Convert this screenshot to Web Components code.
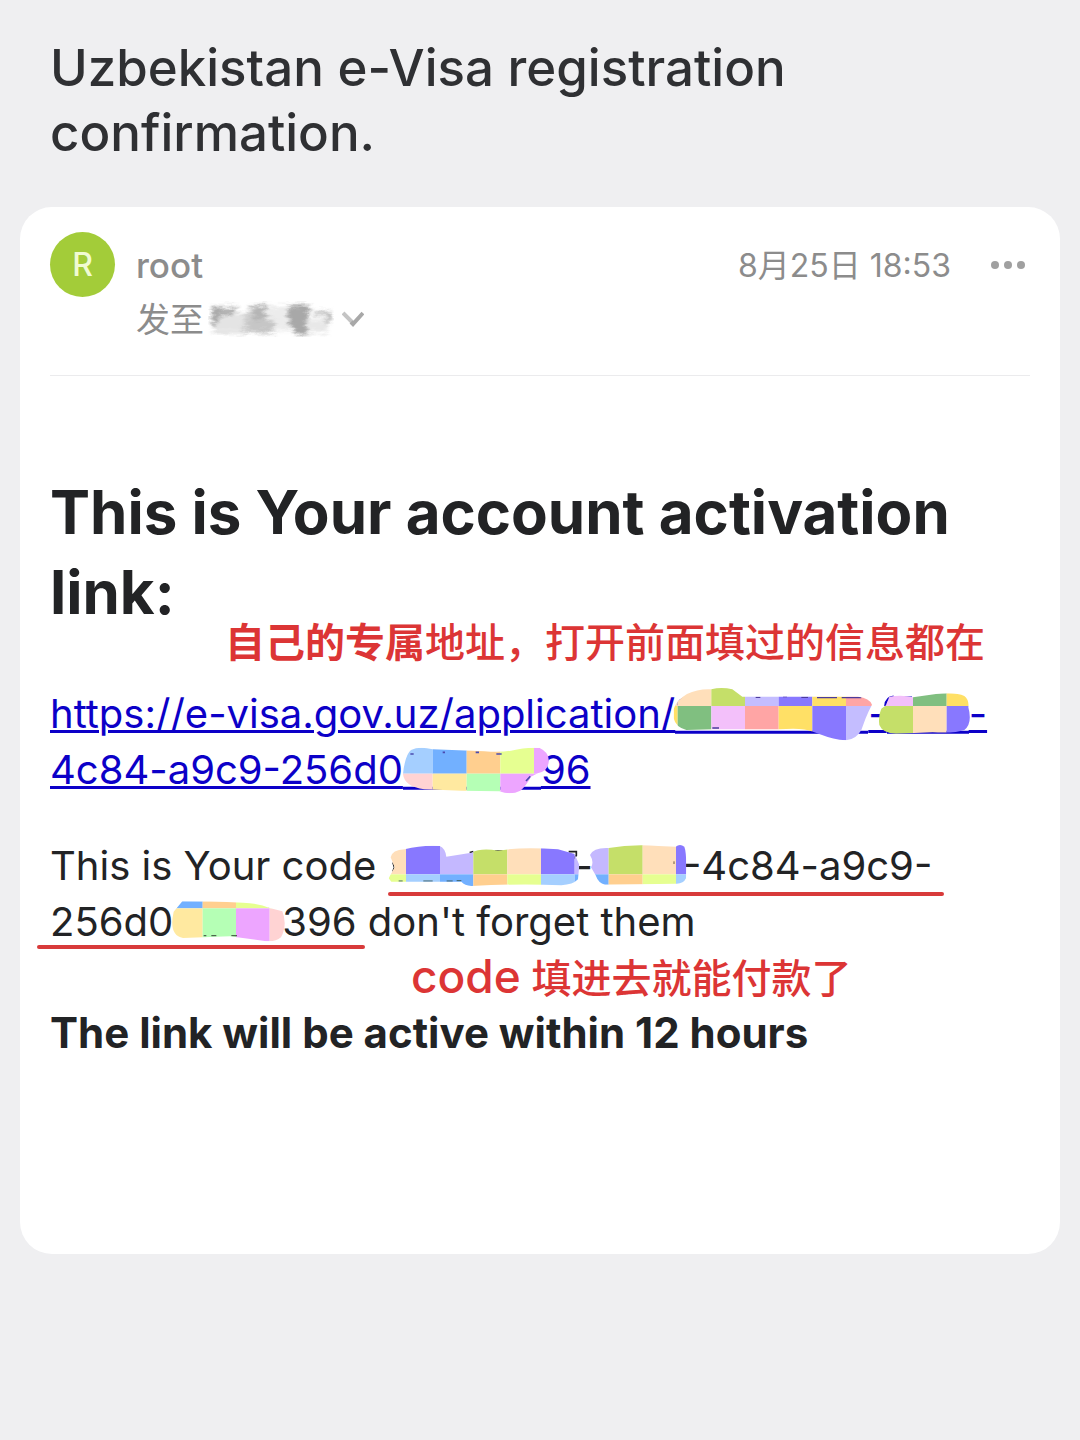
<!DOCTYPE html>
<html lang="zh-CN">
<head>
<meta charset="utf-8">
<meta name="viewport" content="width=device-width, initial-scale=1">
<title>Uzbekistan e-Visa registration confirmation.</title>
<style>
  body {
    margin: 0;
    background: #efeff1;
    color: #222325;
    font-family: Inter, "Noto Sans CJK SC", sans-serif;
  }
</style>
</head>
<body>
<mail-page>
  <span slot="subject">Uzbekistan e-Visa registration confirmation.</span>
  <mail-header name="root" initial="R" date="8月25日 18:53"></mail-header>
  <mail-body></mail-body>
</mail-page>

<script>
class MailPage extends HTMLElement {
  constructor() {
    super();
    this.attachShadow({ mode: 'open' });
    this.shadowRoot.innerHTML = `
      <style>
        :host { display: block; padding: 35px 20px; }
        h1 {
          margin: 0 30px 42px;
          max-width: 800px;
          font-size: 51px;
          line-height: 65px;
          font-weight: 500;
          color: #2f3033;
        }
        main {
          padding: 25px 30px 193px;
          background: #fff;
          border-radius: 32px;
        }
      </style>
      <h1><slot name="subject"></slot></h1>
      <main><slot></slot></main>
    `;
  }
}

class MailHeader extends HTMLElement {
  constructor() {
    super();
    this.attachShadow({ mode: 'open' });
  }

  connectedCallback() {
    this.shadowRoot.innerHTML = `
      <style>
        :host {
          display: flex;
          gap: 21px;
          padding-bottom: 34px;
          border-bottom: 1px solid #ebebed;
          color: #8c8c8c;
        }
        .avatar {
          width: 65px;
          height: 65px;
          border-radius: 50%;
          background: #a3cc39;
          color: #f0fbd2;
          font-size: 32px;
          line-height: 65px;
          font-weight: 500;
          text-align: center;
        }
        .info { flex: 1; }
        .row { display: flex; align-items: center; justify-content: space-between; height: 65px; }
        .name { font-size: 35px; font-weight: 500; }
        .right { display: flex; align-items: center; gap: 40px; padding-right: 5px; }
        time, .label { padding-bottom: 4px; }
        time { font-size: 32px; }
        button {
          display: flex;
          align-items: center;
          padding: 0;
          border: 0;
          background: none;
          color: inherit;
          font: inherit;
          cursor: pointer;
        }
        .to { height: 44px; font-size: 34px; }
        svg { display: block; }
        .arrow { margin-left: 8px; }
      </style>
      <div class="avatar">${this.getAttribute('initial')}</div>
      <div class="info">
        <div class="row">
          <span class="name">${this.getAttribute('name')}</span>
          <div class="right">
            <time>${this.getAttribute('date')}</time>
            <button aria-label="更多">
              <svg width="34" height="8" viewBox="0 0 34 8" fill="#a0a0a0">
                <circle cx="4" cy="4" r="4"/><circle cx="17" cy="4" r="4"/><circle cx="30" cy="4" r="4"/>
              </svg>
            </button>
          </div>
        </div>
        <button class="to"><span class="label">发至</span><hidden-name></hidden-name>
          <svg class="arrow" width="22" height="16" viewBox="0 0 22 16" fill="none" stroke="#a8a8a8" stroke-width="4">
            <path d="M1 2L11 12" stroke="#c4c4c4"/><path d="M9 11L11 13L21 2"/>
          </svg>
        </button>
      </div>
    `;
  }
}

// Smudged recipient name
class HiddenName extends HTMLElement {
  constructor() {
    super();
    this.attachShadow({ mode: 'open' });
    this.shadowRoot.innerHTML = `
      <style>
        :host { display: block; margin-left: 4px; }
        svg { display: block; }
      </style>
      <svg width="126" height="36" viewBox="0 0 126 36" aria-hidden="true">
        <defs>
          <filter id="smudge" x="0" y="0" width="1" height="1">
            <feGaussianBlur stdDeviation="2" result="soft"/>
            <feTurbulence type="fractalNoise" baseFrequency="0.08 0.3" numOctaves="3" seed="4"/>
            <feDisplacementMap in="soft" scale="9" xChannelSelector="R" yChannelSelector="G"/>
          </filter>
        </defs>
        <g filter="url(#smudge)">
          <rect width="126" height="36" fill="none"/>
          <path d="M4 6H28V15H15V29H7L2 17Z" fill="#aaa"/>
          <path d="M14 13H40V33H5V28Z" fill="#e4e4e4"/>
          <path d="M36 15L44 4H59V31H36Z" fill="#d2d2d2"/>
          <path d="M45 5H58V18H44Z" fill="#b5b5b5"/>
          <path d="M39 18H67V32H37Z" fill="#c6c6c6"/>
          <path d="M60 5H82V30H66V17H60Z" fill="#ececec"/>
          <path d="M81 4H101V33H87L80 20Z" fill="#a8a8a8"/>
          <path d="M98 18H120V32H99Z" fill="#e8e8e8"/>
          <path d="M106 10H123V21H117V14H106Z" fill="#bbb"/>
        </g>
      </svg>
    `;
  }
}

// Each mosaic: box = viewBox in thirds of a pixel, cols = column edges,
// split = y between the two rows, shape = painted outline, under = what shows around it
const MOSAICS = {
  linkA: {
    box: [96, 48, 579, 168],
    cols: [84, 104, 205, 306, 407, 508, 609, 700],
    split: 108,
    top: ['#ffdfba', '#ffdfba', '#c5df69', '#c4bdff', '#8878ff', '#ffe066', '#ffa5a5'],
    bottom: ['#ffe066', '#80bf80', '#f3c0fa', '#ffa5a5', '#ffe066', '#8878ff', '#c4bdff'],
    shape: 'M92 118Q98 92 132 72Q165 56 205 58Q235 50 268 58L298 80L645 80Q680 84 687 104Q678 120 668 145L655 180Q640 208 609 211Q570 208 535 194L506 184Q480 172 407 178L210 178L130 180Q98 172 92 145Z',
    under: '<path d="M96 186.500H675" stroke="#0c00c8" stroke-width="9"/><path d="M104 106Q108 86 130 84" stroke="#0c00c8" stroke-width="6" fill="none"/>',
    over: '<path d="M338 82H352M420 80H432M475 82H495M522 83H582M596 83H655M208 174H228" stroke="#4b3b9c" stroke-width="4"/>'
  },
  linkB: {
    box: [733, 48, 246, 168],
    cols: [706, 811, 912, 990],
    split: 108,
    top: ['#f3c0fa', '#80bf80', '#ffe066'],
    bottom: ['#c5df69', '#ffdfba', '#8878ff'],
    shape: 'M730 106L740 80Q780 74 811 82L880 72Q940 66 965 78Q980 90 977 112Q990 160 965 180Q940 190 870 187L760 191Q720 190 710 165Q706 138 716 116Z',
    under: '<path d="M733 186.500H979" stroke="#0c00c8" stroke-width="9"/><path d="M728 108Q730 82 753 80M785 83H808" stroke="#0c00c8" stroke-width="7" fill="none"/>',
    over: ''
  },
  linkC: {
    box: [56, 36, 414, 168],
    cols: [50, 145, 247, 348, 449, 500],
    split: 131,
    top: ['#a5cfff', '#72b0ff', '#ffcf8f', '#e6ff91', '#eda5ff'],
    bottom: ['#ffd3d3', '#ffe9a0', '#b5ffb5', '#eda5ff', '#eda5ff'],
    shape: 'M56 132Q62 75 80 60Q105 48 145 58L300 64Q350 68 380 62Q430 50 466 54Q500 70 492 102Q488 125 460 130L440 140Q425 168 408 182Q380 196 345 184Q230 184 120 178Q60 170 56 132Z',
    under: '<path d="M56 174.500H470" stroke="#0c00c8" stroke-width="9"/>',
    over: '<path d="M78 72H88M175 67H182M274 67H284M336 72H352M425 153L438 139" stroke="#4b4bb0" stroke-width="5"/>'
  },
  codeA: {
    box: [50, 24, 561, 168],
    cols: [45, 104, 206, 306, 408, 509, 610, 640],
    split: 133,
    top: ['#ffdfba', '#8878ff', '#c4b8ff', '#c5df69', '#ffdfba', '#8878ff', '#c4b8ff'],
    bottom: ['#e6ff91', '#a5cfff', '#72b0ff', '#ffcf8f', '#e6ff91', '#a5cfff', '#72b0ff'],
    shape: 'M52 145L70 112L58 82Q62 60 100 58Q150 45 205 48Q222 55 225 80L300 68Q330 52 380 62Q450 50 560 58L610 72L624 105L620 148Q605 164 570 166Q450 160 300 168Q280 166 270 155H60Z',
    under: '<path d="M64 98L68 112L64 124" stroke="#222325" stroke-width="3" fill="none"/><path d="M295 68L306 65M370 63H394M592 65H615V76L603 90" stroke="#222325" stroke-width="5" fill="none"/>',
    over: '<path d="M82 153H94M156 153H184M226 153H244M256 152H270" stroke="#3e5f61" stroke-width="3"/>'
  },
  codeB: {
    box: [664, 24, 270, 168],
    cols: [645, 711, 813, 913, 950],
    split: 133,
    top: ['#c4b8ff', '#c5df69', '#ffdfba', '#8878ff'],
    bottom: ['#72b0ff', '#ffcf8f', '#e6ff91', '#a5cfff'],
    shape: 'M655 75Q665 52 711 54Q780 42 860 48L912 50Q925 40 938 50Q946 70 943 145Q935 163 910 161L700 164Q680 160 672 136L658 112Q668 96 655 75Z',
    under: '',
    over: '<path d="M907 94V102" stroke="#6d5c3c" stroke-width="3"/>'
  },
  codeC: {
    box: [430, 12, 327, 168],
    cols: [420, 519, 619, 720, 770],
    split: 55,
    top: ['#72b0ff', '#ffcf8f', '#e6ff91', '#e6ff91'],
    bottom: ['#ffe9a0', '#b5ffb5', '#eda5ff', '#ffd3d3'],
    shape: 'M432 65L458 34Q540 34 640 38Q690 40 720 54L758 64Q774 105 754 142Q735 158 700 152L600 139L460 144Q416 135 432 65Z',
    under: '',
    over: '<path d="M522 137H530M545 137H560M605 137H622M716 50H722" stroke="#4c654c" stroke-width="4"/>'
  }
};

class MosaicMark extends HTMLElement {
  constructor() {
    super();
    this.attachShadow({ mode: 'open' });
  }

  connectedCallback() {
    const m = MOSAICS[this.getAttribute('kind')];
    const cells = m.top.map((color, i) => {
      const x = m.cols[i];
      const w = m.cols[i + 1] - x;
      return `
        <rect x="${x}" y="0" width="${w}" height="${m.split}" fill="${color}"/>
        <rect x="${x}" y="${m.split}" width="${w}" height="150" fill="${m.bottom[i]}"/>
      `;
    }).join('');

    this.shadowRoot.innerHTML = `
      <style>
        :host { display: inline-block; position: relative; height: 56px; vertical-align: top; }
        svg { display: block; overflow: visible; }
      </style>
      <svg width="${Math.round(m.box[2] / 3)}" height="56" viewBox="${m.box.join(' ')}" aria-hidden="true">
        <defs><clipPath id="shape"><path d="${m.shape}"/></clipPath></defs>
        ${m.under}
        <g clip-path="url(#shape)">${cells}${m.over}</g>
      </svg>
    `;
  }
}

// Red remark laid over the mail
class RedNote extends HTMLElement {
  constructor() {
    super();
    this.attachShadow({ mode: 'open' });
    this.shadowRoot.innerHTML = `
      <style>
        :host {
          display: block;
          position: absolute;
          color: #dc3535;
          font-size: 40px;
          line-height: 56px;
          font-weight: 500;
          white-space: nowrap;
        }
      </style>
      <slot></slot>
    `;
  }
}

class MailBody extends HTMLElement {
  constructor() {
    super();
    this.attachShadow({ mode: 'open' });
    this.shadowRoot.innerHTML = `
      <style>
        :host { display: block; padding-top: 96px; font-size: 40px; line-height: 56px; }
        h2 { margin: 0 0 54px; font-size: 60px; line-height: 80px; font-weight: 700; }
        p { margin: 0 0 40px; }
        section { position: relative; }
        a {
          color: #0c00c8;
          text-decoration-thickness: 3px;
          text-underline-offset: 2px;
        }
        .line { display: block; white-space: nowrap; }
        .code { position: relative; display: inline-block; vertical-align: top; }
        .code::after {
          content: "";
          position: absolute;
          left: 0;
          right: -12px;
          bottom: -2px;
          height: 4px;
          border-radius: 2px;
          background: #d83a3a;
        }
        .code.second::after { left: -13px; right: -8px; bottom: 1px; }
        .first-note { top: 143px; left: 175px; }
        .second-note { top: 476px; left: 361px; }
        .latin { font-size: 46px; }
        .last { margin: 0; padding-top: 15px; font-size: 42px; }
      </style>
      <section>
        <h2>This is Your account activation link:</h2>
        <p><a href="#"><span class="line">https://e-visa.gov.uz/application/<mosaic-mark kind="linkA"></mosaic-mark>-<mosaic-mark kind="linkB"></mosaic-mark>-</span><span class="line">4c84-a9c9-256d0<mosaic-mark kind="linkC"></mosaic-mark>96</span></a></p>
        <p>
          <span class="line">This is Your code <span class="code"><mosaic-mark kind="codeA"></mosaic-mark>-<mosaic-mark kind="codeB"></mosaic-mark>-4c84-a9c9-</span></span>
          <span class="line"><span class="code second">256d0<mosaic-mark kind="codeC"></mosaic-mark>396</span> don't forget them</span>
        </p>
        <red-note class="first-note"><b>自己的专属</b>地址，打开前面填过的信息都在</red-note>
        <red-note class="second-note"><span class="latin">code</span> 填进去就能付款了</red-note>
        <p class="last"><b>The link will be active within 12 hours</b></p>
      </section>
    `;
  }
}

customElements.define('hidden-name', HiddenName);
customElements.define('mosaic-mark', MosaicMark);
customElements.define('red-note', RedNote);
customElements.define('mail-header', MailHeader);
customElements.define('mail-body', MailBody);
customElements.define('mail-page', MailPage);
</script>
</body>
</html>
